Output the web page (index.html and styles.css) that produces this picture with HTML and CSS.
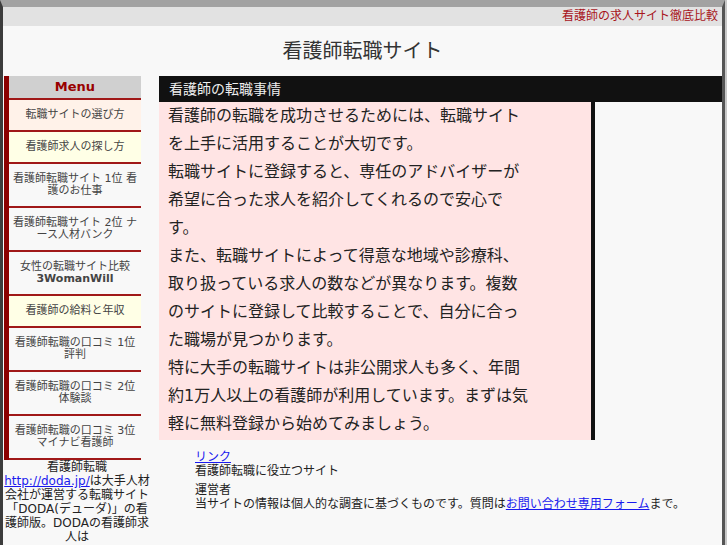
FILE: index.html
```html
<!DOCTYPE html>
<html lang="ja">
<head>
<meta charset="utf-8">
<title>看護師転職サイト</title>
<link rel="stylesheet" href="styles.css">
</head>
<body>
<div class="page">
  <div class="topline"><p class="tagline">看護師の求人サイト徹底比較</p></div>
  <h1 class="site-title">看護師転職サイト</h1>
  <div class="columns">
    <aside class="sidebar">
      <nav class="menu">
        <div class="menu-head">Menu</div>
        <ul class="menu-list">
          <li class="peach"><a href="#">転職サイトの選び方</a></li>
          <li class="cream"><a href="#">看護師求人の探し方</a></li>
          <li><a href="#">看護師転職サイト 1位 看護のお仕事</a></li>
          <li><a href="#">看護師転職サイト 2位 ナース人材バンク</a></li>
          <li><a href="#">女性の転職サイト比較 <b>3WomanWill</b></a></li>
          <li class="cream"><a href="#">看護師の給料と年収</a></li>
          <li><a href="#">看護師転職の口コミ 1位 評判</a></li>
          <li><a href="#">看護師転職の口コミ 2位 体験談</a></li>
          <li><a href="#">看護師転職の口コミ 3位 マイナビ看護師</a></li>
        </ul>
      </nav>
      <p class="side-note">看護師転職<br><a href="#">http://doda.jp/</a>は大手人材会社が運営する転職サイト「DODA(デューダ)」の看護師版。DODAの看護師求人は<br><a href="#">http://doda.jp/promo/nurse/</a></p>
    </aside>
    <main class="main">
      <h2 class="main-head">看護師の転職事情</h2>
      <div class="main-row">
        <div class="article">
          <p>看護師の転職を成功させるためには、転職サイトを上手に活用することが大切です。</p>
          <p>転職サイトに登録すると、専任のアドバイザーが希望に合った求人を紹介してくれるので安心です。</p>
          <p>また、転職サイトによって得意な地域や診療科、取り扱っている求人の数などが異なります。複数のサイトに登録して比較することで、自分に合った職場が見つかります。</p>
          <p>特に大手の転職サイトは非公開求人も多く、年間約1万人以上の看護師が利用しています。まずは気軽に無料登録から始めてみましょう。</p>
        </div>
        <div class="side-space"></div>
      </div>
      <div class="links">
        <div class="link-block">
          <a href="#">リンク</a>
          <div>看護師転職に役立つサイト</div>
        </div>
        <div class="link-block">
          <div>運営者</div>
          <div>当サイトの情報は個人的な調査に基づくものです。質問は<a href="#">お問い合わせ専用フォーム</a>まで。</div>
        </div>
      </div>
    </main>
  </div>
</div>
</body>
</html>
```
FILE: styles.css
```css
html, body {
  margin: 0;
  padding: 0;
}

body {
  background: #c8c8c8;
  font-family: "DejaVu Sans", "Noto Sans CJK JP", sans-serif;
  color: #222;
}

.page {
  width: 719px;
  min-height: 600px;
  background: #f8f8f8;
  border-top: 7px solid #a2a2a2;
  border-left: 3px solid #3c3c3c;
  border-right: 3px solid #555;
}

.topline {
  background: #e2e2e2;
  height: 19px;
  padding-right: 4px;
  text-align: right;
}

.tagline {
  margin: 0;
  font-size: 12px;
  line-height: 19px;
  color: #a8141c;
}

.site-title {
  margin: 0;
  padding: 13px 0;
  font-size: 20px;
  line-height: 24px;
  font-weight: normal;
  text-align: center;
  color: #333;
}

.columns {
  display: flex;
  align-items: flex-start;
}

.sidebar {
  width: 146px;
  margin-left: 1px;
}

.menu {
  width: 132px;
  border-left: 5px solid #8b0000;
}

.menu-head {
  height: 22px;
  line-height: 22px;
  background: #d0d0d0;
  color: #990000;
  font-size: 13px;
  font-weight: bold;
  text-align: center;
}

.menu-list {
  list-style: none;
  margin: 0;
  padding: 0;
  border-bottom: 2px solid #a01818;
}

.menu-list a {
  display: block;
  border-top: 2px solid #a01818;
  padding: 9px 3px;
  font-size: 11px;
  line-height: 12px;
  color: #444;
  text-align: center;
  text-decoration: none;
}

.menu-list .peach a {
  background: #fff2e9;
}

.menu-list .cream a {
  background: #ffffe6;
}

.side-note {
  margin: 0;
  font-size: 12px;
  line-height: 14px;
  text-align: center;
  color: #222;
}

.side-note a,
.links a {
  color: #1a1aee;
}

.main {
  width: 563px;
  margin-left: 9px;
}

.main-head {
  margin: 0;
  height: 26px;
  padding-left: 10px;
  background: #111;
  color: #eee;
  font-size: 14px;
  line-height: 26px;
  font-weight: normal;
}

.main-row {
  display: flex;
}

.article {
  box-sizing: border-box;
  width: 436px;
  padding: 0 62px 2px 9px;
  background: #ffe4e4;
  border-right: 4px solid #111;
  font-size: 16px;
  line-height: 28px;
  color: #222;
}

.article p {
  margin: 0;
}

.side-space {
  flex: 1;
}

.links {
  margin: 10px 0 0 36px;
  font-size: 12px;
  line-height: 14px;
  color: #222;
}

.link-block + .link-block {
  margin-top: 5px;
}
```
